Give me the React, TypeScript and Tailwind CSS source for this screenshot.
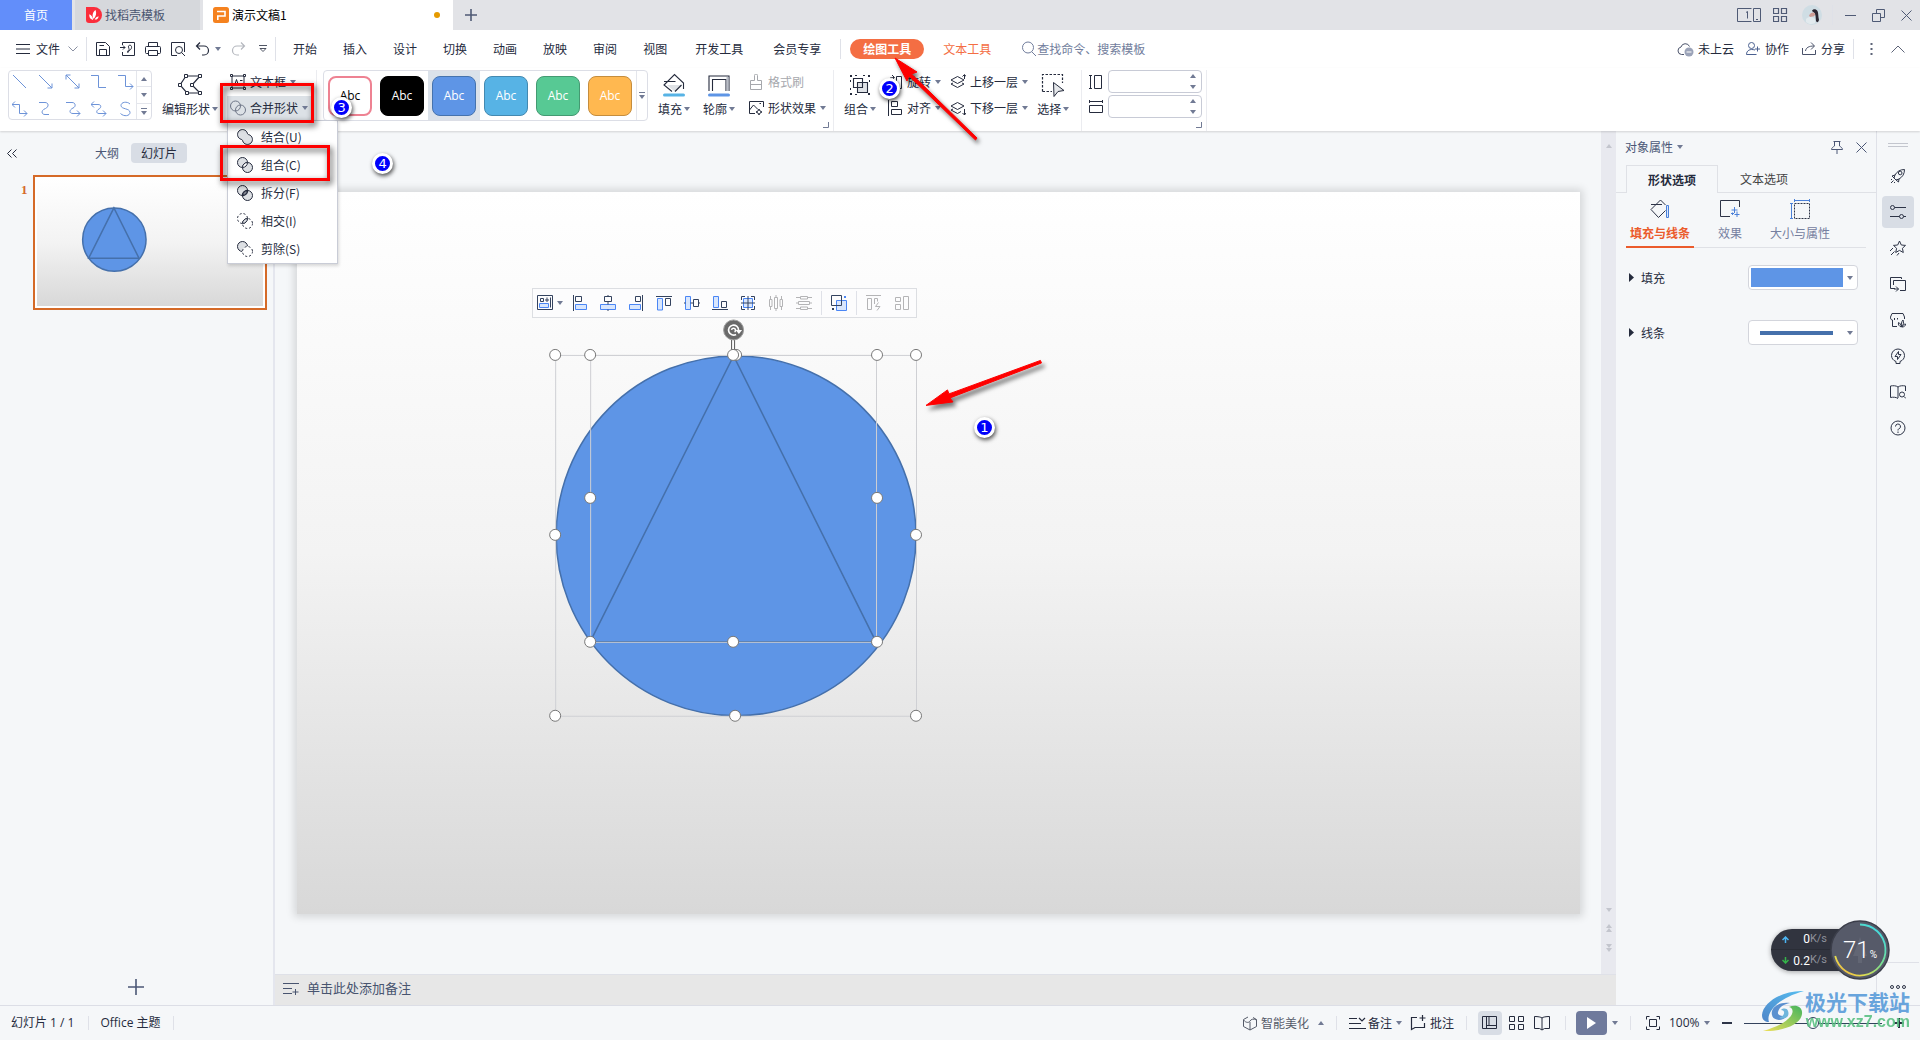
import React from 'react';

type IconProps = { children: React.ReactNode; className?: string; box?: string };

const Icon = ({ children, className = 'w-4 h-4', box = '0 0 16 16' }: IconProps) => (
  <svg viewBox={box} className={`shrink-0 ${className}`} fill="none" stroke="currentColor" strokeWidth="1" aria-hidden="true">
    {children}
  </svg>
);

const Caret = ({ up = false, className = 'text-[#717a94]' }: { up?: boolean; className?: string }) => (
  <svg viewBox="0 0 6 4" className={`w-[6px] h-1 shrink-0 ${className}`} fill="currentColor" aria-hidden="true">
    <path d={up ? 'M0 4L3 0L6 4z' : 'M0 0H6L3 4z'} />
  </svg>
);

const Divider = ({ className = 'h-6' }: { className?: string }) => (
  <span className={`w-px shrink-0 bg-[#dfe1e8] ${className}`} />
);

const Badge = ({ n, className }: { n: number; className: string }) => (
  <span
    className={`absolute z-40 w-[21px] h-[21px] rounded-full border-[3px] border-white bg-[#0000fb] text-white text-[13px] leading-[15px] text-center font-['DejaVu_Sans'] shadow-[1px_2px_4px_rgba(0,0,0,0.7)] ${className}`}
  >
    {n}
  </span>
);

const RedBox = ({ className }: { className: string }) => (
  <span
    className={`absolute z-30 pointer-events-none border-[3px] border-[#fe0000] drop-shadow-[2px_3px_3px_rgba(0,0,0,0.75)] ${className}`}
  />
);

/* ---------- title bar ---------- */

const TitleBar = () => (
  <header className="flex items-stretch h-[30px] bg-[#e2e3e7] text-[#4f5a75]">
    <button className="w-[72px] bg-[#628efa] text-white">首页</button>
    <button className="ml-[3px] w-[125px] bg-[#d6d8dc] flex items-center gap-[3px] pl-[11px] text-[#4a5570]">
      <svg viewBox="0 0 16 16" className="w-4 h-4">
        <path d="M0 0H8A8 8 0 0 1 8 16H3A3 3 0 0 1 0 13z" fill="#fb2d3b" />
        <path d="M7.2 13C3.8 12 3 9.5 3.4 7.2C5.2 8 6.8 9.6 7.2 13zM7.6 12C5.8 8.5 6.6 5 9.6 3C10.8 6.4 10 9.6 7.6 12zM8.6 12.6C9.6 10.6 11 9.6 12.6 9.2C12.4 11.4 11 12.8 8.6 12.6z" fill="#fff" />
      </svg>
      找稻壳模板
    </button>
    <button className="ml-[3px] w-[250px] bg-white flex items-center pl-[10px] pr-[13px] text-black">
      <svg viewBox="0 0 16 16" className="w-4 h-4 mr-[3px]">
        <rect width="16" height="16" rx="2.5" fill="#f5821f" />
        <path d="M4 4.500H12V9H4.800V13" stroke="#fff" strokeWidth="1.600" fill="none" />
      </svg>
      演示文稿1
      <span className="ml-auto w-[6px] h-[6px] rounded-full bg-[#e59a00]" />
    </button>
    <button aria-label="新建" className="w-9 flex items-center justify-center">
      <Icon className="w-3 h-3" box="0 0 12 12"><path d="M6 0V12M0 6H12" strokeWidth="1.6" /></Icon>
    </button>
    <div className="ml-auto flex items-center pr-2">
      <button aria-label="窗口布局">
        <Icon className="w-6 h-[14px]" box="0 0 24 14">
          <path d="M14.500 .5H.5V13.500H14.500M16.500 .5H23.500V13.500H16.500zM19 11.500H21M9 4.500L10.500 3.500V10.500" />
        </Icon>
      </button>
      <button aria-label="应用" className="ml-3">
        <Icon className="w-[15px] h-[15px]" box="0 0 15 15">
          <path d="M.5 .5H5.5V5.5H.5zM8.5 .5H13.5V5.5H8.5zM.5 8.5H5.5V13.5H.5zM8.5 8.5H13.5V13.5H8.5z" strokeWidth="1.2" />
        </Icon>
      </button>
      <button aria-label="账户" className="ml-[14px]">
        <svg viewBox="0 0 20 20" className="w-5 h-5">
          <circle cx="10" cy="10" r="10" fill="#cfdde4" />
          <path d="M10 6C10.500 4 14 3.500 15.500 6C16.500 8 16 11 17 15C16 18 14.500 17.500 14 16C13.500 13 14 10 12.500 8z" fill="#2b2530" />
          <path d="M7 10.500C8.500 8 10.500 6.500 12.500 8C14 9.500 12.500 11.500 10.500 11.500L8 12z" fill="#cf9b94" />
          <path d="M4 14C7 11 11 12 13 14V18C10 20 6 19 4 17z" fill="#e2eaee" />
        </svg>
      </button>
      <Divider className="h-5 ml-[10px] bg-[#c5c8d0]" />
      <button aria-label="最小化" className="ml-3">
        <Icon className="w-[11px] h-[11px]" box="0 0 11 11"><path d="M0 5.500H11" /></Icon>
      </button>
      <button aria-label="还原" className="ml-4">
        <Icon className="w-[13px] h-[13px]" box="0 0 13 13"><path d="M.5 4.500H8.500V12.500H.5zM4.500 4.500V.5H12.500V8.500H8.500" /></Icon>
      </button>
      <button aria-label="关闭" className="ml-4">
        <Icon className="w-[11px] h-[11px]" box="0 0 11 11"><path d="M.5 .5L10.500 10.500M10.500 .5L.5 10.500" /></Icon>
      </button>
    </div>
  </header>
);

/* ---------- menu row ---------- */

const quickActions = [
  { label: '保存', d: 'M1.500 1.500H10.500L14.500 5.500V14.500H1.500zM4.500 14.500V8.500H11.500V14.500M4.500 4.500H9' },
  { label: '输出为PDF', d: 'M2.500 4V1.500H14.500V14.500H2.500V11M0 6.500H5M3 4.500L5 6.500L3 8.500M7 10.500C10 9.500 12 8 11.500 5.500C11 3.500 8 4 8.500 6C9 8.500 10 9 7.500 12' },
  { label: '打印', d: 'M3.500 5V1.500H12.500V5M3.500 12.500H1.500A1 1 0 0 1 .5 11.500V6.500A1 1 0 0 1 1.500 5.500H14.500A1 1 0 0 1 15.500 6.500V11.500A1 1 0 0 1 14.500 12.500H12.500M3.500 9.500H12.500V14.500H3.500z' },
  { label: '打印预览', d: 'M7 14.500H1.500V1.500H14.500V11M12.500 9A3.500 3.500 0 1 1 5.500 9A3.500 3.500 0 1 1 12.500 9M11.500 11.500L15 15' },
];

const menus = ['开始', '插入', '设计', '切换', '动画', '放映', '审阅', '视图'];

const MenuRow = () => (
  <nav className="flex items-center h-[38px] bg-white pl-4 pr-[15px]">
    <button className="flex items-center">
      <Icon className="w-[14px] h-[10px]" box="0 0 14 10"><path d="M0 .5H14M0 5H14M0 9.500H14" /></Icon>
      <span className="ml-1.5">文件</span>
      <Icon className="w-[10px] h-[6px] ml-2 text-[#8a90a2]" box="0 0 10 6"><path d="M.5 .5L5 5L9.500 .5" /></Icon>
    </button>
    <Divider className="h-6 ml-2" />
    <div className="flex items-center gap-[9px] ml-2">
      {quickActions.map((a) => (
        <button key={a.label} aria-label={a.label}>
          <Icon><path d={a.d} /></Icon>
        </button>
      ))}
      <button aria-label="撤销" className="flex items-center gap-1">
        <Icon><path d="M5 1.500L1.500 5L5 8.500M1.500 5H9A4.500 4.500 0 0 1 9 14H7" strokeWidth="1.2" /></Icon>
        <Caret />
      </button>
      <button aria-label="恢复" className="text-[#b4b7be]">
        <Icon><path d="M11 1.500L14.500 5L11 8.500M14.500 5H7A4.500 4.500 0 0 0 7 14H9" strokeWidth="1.2" /></Icon>
      </button>
      <button aria-label="自定义快速访问" className="ml-1">
        <Icon className="w-2 h-2" box="0 0 8 8"><path d="M0 .5H8M1 3.500H7L4 6.500z" strokeWidth="0.800" /></Icon>
      </button>
    </div>
    <Divider className="h-6 ml-2" />
    <div className="flex items-center ml-1">
      {menus.map((m) => (
        <button key={m} className="px-[13px]">{m}</button>
      ))}
      <button className="px-[15px]">开发工具</button>
      <button className="px-[15px]">会员专享</button>
    </div>
    <Divider className="h-5 ml-1" />
    <div className="relative z-30 ml-[9px]">
      <button className="block w-[74px] h-5 rounded-full bg-[#f46e43] text-white font-bold">绘图工具</button>
      <svg viewBox="0 0 100 100" className="absolute left-10 top-[15px] w-[100px] h-[100px] pointer-events-none drop-shadow-[2px_3px_2px_rgba(0,0,0,0.6)]">
        <path d="M5 4L27 18L21.500 20L87 84L85.500 86L19 22L17 27z" fill="#fe0000" stroke="#fe0000" />
      </svg>
      <Badge n={2} className="left-[29px] top-[39px]" />
    </div>
    <button className="ml-[19px] text-[#f46e43]">文本工具</button>
    <label className="flex items-center ml-[30px] text-[#717d9c]">
      <Icon><path d="M12.500 6.500A5.500 5.500 0 1 1 1.500 6.500A5.500 5.500 0 1 1 12.500 6.500M11 11L15 15" /></Icon>
      <input aria-label="查找命令" placeholder="查找命令、搜索模板" className="w-[140px] outline-none placeholder:text-[#717d9c]" />
    </label>
    <div className="ml-auto flex items-center">
      <button className="flex items-center gap-1">
        <Icon className="w-[17px] h-4" box="0 0 17 16">
          <path d="M7 13.500H4.500A3.800 3.800 0 0 1 4 6A4.500 4.500 0 0 1 12.500 5.500" stroke="#4a526a" />
          <circle cx="12" cy="11" r="4.500" fill="#9ba3b8" stroke="none" />
          <path d="M9.500 11H14.500" stroke="#fff" />
        </Icon>
        未上云
      </button>
      <button className="flex items-center gap-1 ml-[11px]">
        <Icon><path d="M9.500 4.500A3 3 0 1 1 3.500 4.500A3 3 0 1 1 9.500 4.500M10 9C5 7.500 1.500 9.500 1.500 13.500H11.500M12.500 5.500V10.500M10 8H15" stroke="#4a6090" /></Icon>
        协作
      </button>
      <button className="flex items-center gap-1 ml-3">
        <Icon><path d="M1.500 7V13.500H14.500V9M4.500 10C5 6.500 8 5 13 5M10 1.500L13.500 5L10 8.500" stroke="#4a526a" /></Icon>
        分享
      </button>
      <Divider className="h-5 ml-2" />
      <button aria-label="更多" className="ml-4">
        <Icon className="w-[3px] h-3" box="0 0 3 12"><path d="M.5 0H2.500V2H.5zM.5 5H2.500V7H.5zM.5 10H2.500V12H.5z" fill="#5d6478" stroke="none" /></Icon>
      </button>
      <button aria-label="收起功能区" className="ml-[18px]">
        <Icon className="w-[14px] h-2" box="0 0 14 8"><path d="M.5 7.500L7 1L13.500 7.500" stroke="#5d6478" /></Icon>
      </button>
    </div>
  </nav>
);

/* ---------- ribbon ---------- */

const lineShapes = [
  'M1 1L14 14',
  'M1 1L14 14M14 9.500V14H9.500',
  'M1 1L14 14M14 9.500V14H9.500M1 5.500V1H5.500',
  'M0 1.500H7.500V13.500H15',
  'M0 1.500H7.500V12.500H15M12 9.500L15 12.500L12 15.500',
  'M0 3.500H7.500V12.500H15M12 9.500L15 12.500L12 15.500M3 .5L0 3.500L3 6.500',
  'M1 1.500H7C11 1.500 11 6 7.500 7.500C3 9 3 13.500 7 13.500H11',
  'M1 1.500H7C11 1.500 11 6 8 7C4 9 4 12.500 8 12.500H15M12 9.500L15 12.500L12 15.500',
  'M0 3.500H7C11 3.500 10 7 8 8C5 9.500 5 12.500 8 12.500H15M12 9.500L15 12.500L12 15.500M3 .5L0 3.500L3 6.500',
  'M12 3C9 0 3 1 3 4.500C3 8.500 12 7 12 11.500C12 15 6 16 2.500 12.500',
];

const swatches = [
  { name: '红色轮廓', style: 'bg-white border-[#ee8292] text-black border-2' },
  { name: '黑色填充', style: 'bg-black border-black text-white' },
  { name: '蓝色填充', style: 'bg-[#5e95e6] border-[#4573ae] text-white' },
  { name: '浅蓝填充', style: 'bg-[#57b3e5] border-[#4489b0] text-white' },
  { name: '绿色填充', style: 'bg-[#57c994] border-[#449a72] text-white' },
  { name: '橙色填充', style: 'bg-[#ffb850] border-[#c58d3d] text-white' },
];

const BigButton = ({ label, icon }: { label: string; icon: React.ReactNode }) => (
  <button className="flex flex-col items-center">
    <span className="h-[30px] flex items-center">{icon}</span>
    <span className="h-[18px] flex items-center gap-0.5">{label}<Caret /></span>
  </button>
);

const RowButton = ({ label, icon, caret = true, className = '' }: { label: string; icon: React.ReactNode; caret?: boolean; className?: string }) => (
  <button className={`h-6 flex items-center gap-1 whitespace-nowrap ${className}`}>
    {icon}
    {label}
    {caret && <Caret />}
  </button>
);

const Launcher = () => (
  <button aria-label="更多设置" className="absolute right-1 bottom-[3px] text-[#717a94]">
    <Icon className="w-[6px] h-[6px]" box="0 0 6 6"><path d="M5.500 0V5.500H0" /></Icon>
  </button>
);

const A = 'M10.500 5.500A5 5 0 1 1 .5 5.500A5 5 0 1 1 10.500 5.500';
const B = 'M15.500 10.500A5 5 0 1 1 5.500 10.500A5 5 0 1 1 15.500 10.500';
const LENS = 'M5.500 10.500A5 5 0 0 1 10.500 5.500A5 5 0 0 1 5.500 10.500z';

const mergeItems = [
  { label: '结合(U)', icon: <path d="M4 10.300A5 5 0 1 1 10.300 4C10.700 5.300 11 5.500 12 5.700A5 5 0 1 1 5.700 12C5.500 11 5.300 10.700 4 10.300z" fill="#dde0e4" /> },
  { label: '组合(C)', icon: <><path d={A} fill="#dde0e4" /><path d={B} fill="#dde0e4" /><path d={LENS} fill="#fff" /></> },
  { label: '拆分(F)', icon: <><path d={A} fill="#dde0e4" /><path d={B} fill="#dde0e4" /><path d={LENS} fill="#fff" strokeWidth="1.500" /><path d="M6.500 9.500A3 3 0 0 1 9.500 6.500A3 3 0 0 1 6.500 9.500z" fill="#dde0e4" strokeWidth="0.800" /></> },
  { label: '相交(I)', icon: <><path d={A} strokeDasharray="2 2" /><path d={B} strokeDasharray="2 2" /><path d={LENS} fill="#dde0e4" /></> },
  { label: '剪除(S)', icon: <><path d={A} fill="#dde0e4" /><path d={B} fill="#fff" stroke="#fff" /><path d={B} strokeDasharray="2 2" /></> },
];

const MergeMenu = () => (
  <>
    <ul className="absolute z-20 left-0 top-[50px] w-[111px] bg-white border border-[#c9ccd6] pt-0.5 shadow-[1px_2px_3px_rgba(0,0,0,0.15)]">
      {mergeItems.map((item) => (
        <li key={item.label}>
          <button className="w-full h-7 flex items-center gap-2 pl-[9px]">
            <Icon>{item.icon}</Icon>
            {item.label}
          </button>
        </li>
      ))}
    </ul>
    <RedBox className="-left-[7px] top-[13px] w-[94px] h-10" />
    <RedBox className="-left-[7px] top-[75px] w-[110px] h-9" />
    <Badge n={3} className="left-[104px] top-[27px]" />
    <Badge n={4} className="left-[145px] top-[83px]" />
  </>
);

const SizeField = ({ label, d }: { label: string; d: string }) => (
  <label className="flex items-center gap-1">
    <Icon><path d={d} /></Icon>
    <span className="flex items-center w-[94px] h-[23px] border border-[#c8cbd6] rounded-sm bg-white pr-[5px]">
      <input aria-label={label} className="min-w-0 flex-1 h-full px-1 outline-none" />
      <span className="flex flex-col gap-[7px]"><Caret up /><Caret /></span>
    </span>
  </label>
);

const layers = 'M1 6L7.500 2.500L14 6L7.500 9.500z';

const Ribbon = () => (
  <section className="relative z-20 flex items-start h-[63px] bg-white pl-2 pt-0.5 shadow-[0_1px_2px_rgba(0,0,0,0.15)]">
    <div className="flex w-36 h-[50px] border border-[#dcdee6] rounded-sm">
      <div className="grid grid-cols-5 flex-1 gap-x-2 gap-y-2 pl-[3px] pt-[3px] text-[#6d93d8]">
        {lineShapes.map((d, i) => (
          <button key={i} aria-label={`线条 ${i + 1}`} className="w-4 h-4"><Icon><path d={d} /></Icon></button>
        ))}
      </div>
      <div className="w-[15px] flex flex-col border-l border-[#e4e6ec] divide-y divide-[#e4e6ec]">
        <button aria-label="上一行" className="flex-1 flex items-center justify-center"><Caret up /></button>
        <button aria-label="下一行" className="flex-1 flex items-center justify-center"><Caret /></button>
        <button aria-label="展开" className="flex-1 flex flex-col gap-0.5 items-center justify-center"><span className="w-[6px] h-px bg-[#717a94]" /><Caret /></button>
      </div>
    </div>

    <div className="ml-2.5">
      <BigButton
        label="编辑形状"
        icon={
          <Icon className="w-6 h-6" box="0 0 24 24">
            <path d="M8 3H22L14 12L22 20H9L2 12z" strokeWidth="1.2" />
            <path d="M6.500 1.500h3v3h-3zM20.500 1.500h3v3h-3zM.5 10.500h3v3h-3zM12.500 10.500h3v3h-3zM7.500 18.500h3v3h-3zM20.500 18.500h3v3h-3z" fill="#fff" />
          </Icon>
        }
      />
    </div>

    <div className="relative flex flex-col gap-0.5 ml-[9px]">
      <RowButton
        className="px-[3px]"
        label="文本框"
        icon={<Icon><path d="M2 2H14V14H2zM4.500 11.500L6.500 5.500L8.500 11.500M5.500 9.500H8M10 6.500H12.500M10 9.500H12.500" /><path d="M.5 .5h2v2h-2zM13.500 .5h2v2h-2zM.5 13.500h2v2h-2zM13.500 13.500h2v2h-2z" fill="#fff" /></Icon>}
      />
      <RowButton
        className="px-[3px] bg-[#dce1e6]"
        label="合并形状"
        icon={<Icon className="w-4 h-4 text-[#6f7788]"><path d="M10.500 6A5 5 0 1 1 .5 6A5 5 0 1 1 10.500 6M15.500 10A5 5 0 1 1 5.500 10A5 5 0 1 1 15.500 10" /></Icon>}
      />
      <MergeMenu />
    </div>

    <Divider className="h-[61px] ml-[5px] bg-[#ebecf0]" />

    <div className="flex ml-1.5 w-[325px] h-[51px] border border-[#dcdee6] rounded-sm">
      {swatches.map((s, i) => (
        <button
          key={s.name}
          aria-label={s.name}
          className={`w-[52px] h-full flex items-center justify-center ${i === 2 ? 'bg-[#dbe2ea]' : ''}`}
        >
          <span className={`w-11 h-10 rounded-lg border flex items-center justify-center font-['Open_Sans'] ${s.style}`}>Abc</span>
        </button>
      ))}
      <button aria-label="更多样式" className="flex-1 border-l border-[#e4e6ec] flex flex-col gap-0.5 items-center justify-center">
        <span className="w-[6px] h-px bg-[#717a94]" />
        <Caret />
      </button>
    </div>

    <div className="relative flex ml-2.5 gap-[13px] h-[61px] pr-[7px] items-start">
      <BigButton
        label="填充"
        icon={
          <Icon className="w-[22px] h-6" box="0 0 22 24">
            <path d="M4 12H18L11.500 18.500z" fill="#dfe2e6" stroke="none" />
            <path d="M9 18.500L1 12L11.500 1.500L20.500 10V16M18.500 12L12 18.500M1 8.500H12.500" strokeWidth="1.1" />
            <path d="M1.500 22H20.500" stroke="#57b3e5" strokeWidth="3" strokeLinecap="round" />
          </Icon>
        }
      />
      <BigButton
        label="轮廓"
        icon={
          <Icon className="w-[22px] h-6" box="0 0 22 24">
            <path d="M1 18V3H21V18M4.500 18V6.500H18V18" strokeWidth="1.1" />
            <path d="M19.500 4V18" stroke="#b9bdc6" strokeWidth="2" />
            <path d="M1.500 22H20.500" stroke="#5e95e6" strokeWidth="3" strokeLinecap="round" />
          </Icon>
        }
      />
      <div className="flex flex-col gap-0.5">
        <RowButton
          className="text-[#a6a8ad]"
          label="格式刷"
          caret={false}
          icon={<Icon><path d="M6.500 6.500V1.500A1.500 1.500 0 0 1 9.500 1.500V6.500H13.500V15.500H2.500V6.500zM2.500 10.500H13.500" /></Icon>}
        />
        <RowButton
          label="形状效果"
          icon={<Icon><path d="M7 13.500H1.500V1.500H15.500V7M1.500 10L5.500 5L10 9.500M11.500 3.500H13M11 9L12 11L14 12L12 13L11 15L10 13L8 12L10 11z" /></Icon>}
        />
      </div>
      <Launcher />
    </div>

    <Divider className="h-[61px] bg-[#ebecf0]" />

    <div className="flex ml-2.5 gap-[9px] items-start">
      <BigButton
        label="组合"
        icon={
          <Icon className="w-[22px] h-[22px]" box="0 0 22 22">
            <path d="M8 8H19V18H8z" fill="#dfe2e6" stroke="none" />
            <path d="M4.500 4.500H13.500V13.500H4.500zM8.500 8.500H18.500V18.500H8.500z" strokeWidth="1.1" />
            <path d="M1 1h2v2h-2zM6 1h2v1h-2zM14 1h2v1h-2zM19 1h2v2h-2zM1 6h1v2h-1zM20 6h1v2h-1zM1 14h1v2h-1zM1 19h2v2h-2zM6 20h2v1h-2zM19 19h2v2h-2z" fill="currentColor" stroke="none" />
          </Icon>
        }
      />
      <div className="flex flex-col gap-0.5 ml-0.5">
        <RowButton label="旋转" icon={<Icon><path d="M9.500 2.500H14.500V14.500H9.500zM1.500 7.500C1.500 4 3.500 3.500 7 3.500M5 1L7.500 3.500L5 6" /></Icon>} />
        <RowButton label="对齐" icon={<Icon><path d="M1.500 0V16M4.500 1.500H10.500V6.500H4.500zM4.500 9.500H14.500V14.500H4.500z" /></Icon>} />
      </div>
      <div className="flex flex-col gap-0.5">
        <RowButton label="上移一层" icon={<Icon><path d={layers} /><path d="M1 10L7.500 13.500L14 10M1 10L3 9M14 10L12 9M14.500 5V1M12.500 2.500L14.500 .5L16 2.500" /></Icon>} />
        <RowButton label="下移一层" icon={<Icon><path d={layers} /><path d="M1 10L7.500 13.500L11 11.500M1 10L3 9M14.500 9V15M12.500 13L14.500 15L16 13" /></Icon>} />
      </div>
      <BigButton
        label="选择"
        icon={
          <Icon className="w-6 h-6" box="0 0 24 24">
            <path d="M1.500 18.500V1.500H21.500V10M1.500 18.500H11" strokeDasharray="2.500 1.500" strokeWidth="1.200" />
            <path d="M12.500 9.500L23 17.500L17 18.500L13 23.500z" fill="#e6e8eb" />
          </Icon>
        }
      />
    </div>

    <Divider className="h-[61px] ml-3 bg-[#ebecf0]" />

    <div className="relative flex flex-col gap-0.5 ml-1.5 h-[61px] pr-1">
      <SizeField label="高度" d="M1 1.500H4M2.500 1.500V14.500M1 14.500H4M6.500 1.500H13.500V14.500H6.500z" />
      <SizeField label="宽度" d="M1.500 1V4M1.500 2.500H14.500M14.500 1V4M1.500 6.500H14.500V13.500H1.500z" />
      <Launcher />
    </div>
    <Divider className="h-[61px] bg-[#ebecf0]" />
  </section>
);

/* ---------- slide ---------- */

const SlideShapes = () => (
  <>
    <circle cx="439" cy="344" r="180" fill="#5e95e6" stroke="#4570ab" strokeWidth="1.500" vectorEffect="non-scaling-stroke" />
    <path d="M436.500 164L293 450H579z" fill="#5e95e6" stroke="#4570ab" strokeWidth="1.500" vectorEffect="non-scaling-stroke" />
  </>
);

const handles = [
  [258, 163], [439, 163], [619, 163], [258, 343], [619, 343], [258, 524], [438, 524], [619, 524],
  [293, 163], [436, 163], [580, 163], [293, 306], [580, 306], [293, 450], [436, 450], [580, 450],
];

const Thumbnails = () => (
  <aside className="relative w-[275px] shrink-0 flex flex-col border-r-2 border-[#e4e6ee]">
    <div className="flex items-center pl-[7px] pt-3">
      <button aria-label="收起" className="mr-[78px]">
        <Icon className="w-[10px] h-[9px]" box="0 0 10 9"><path d="M4.500 .5L.5 4.500L4.500 8.500M9.500 .5L5.500 4.500L9.500 8.500" /></Icon>
      </button>
      <button className="text-[#4b5776]">大纲</button>
      <button className="ml-3 w-14 h-5 rounded-sm bg-[#d8dde5]">幻灯片</button>
    </div>
    <div className="flex pl-[21px] pr-1.5 pt-3">
      <span className="w-3 pt-1.5 text-[#d56a28] text-[13px] font-bold font-['Liberation_Serif']">1</span>
      <button aria-label="幻灯片 1" className="flex-1 border-2 border-[#d56a28] bg-white p-0.5">
        <span className="block aspect-video bg-linear-to-b from-white via-[#f3f3f3] via-50% to-[#d8d8d8]">
          <svg viewBox="0 0 1283 722" className="w-full h-full"><SlideShapes /></svg>
        </span>
      </button>
    </div>
    <button aria-label="新建幻灯片" className="mt-auto mx-auto pr-0.5 pb-[10px] text-[#4b5776]">
      <Icon><path d="M8 0V16M0 8H16" strokeWidth="1.600" /></Icon>
    </button>
  </aside>
);

const alignTools = [
  { label: '左对齐', dark: 'M1.500 0V16M3.500 1.500H9.500V6.500H3.500z', blue: 'M3.500 9.500H14.500V14.500H3.500z' },
  { label: '水平居中', dark: 'M8 0V1.500M8 6.500V9.500M8 14.500V16M4.500 1.500H11.500V6.500H4.500z', blue: 'M.5 9.500H15.500V14.500H.5z' },
  { label: '右对齐', dark: 'M14.500 0V16M7.500 1.500H12.500V6.500H7.500z', blue: 'M1.500 9.500H12.500V14.500H1.500z' },
  { label: '靠上对齐', dark: 'M0 1.500H16M9.500 3.500H14.500V10.500H9.500z', blue: 'M1.500 3.500H6.500V15H1.500z' },
  { label: '垂直居中', dark: 'M0 8H1.500M6.500 8H9.500M14.500 8H16M9.500 4.500H14.500V11.500H9.500z', blue: 'M1.500 1.500H6.500V14.500H1.500z' },
  { label: '靠下对齐', dark: 'M0 14.500H16M9.500 6.500H14.500V12.500H9.500z', blue: 'M1.500 1.500H6.500V12.500H1.500z' },
  { label: '居中对齐', dark: 'M1.500 5V1.500H5M11 1.500H14.500V5M1.500 11V14.500H5M11 14.500H14.500V11M8 1V15M1 8H15', blue: 'M3.500 3.500H12.500V12.500H3.500z' },
];

const distributeTools = [
  { label: '横向分布', d: 'M1.500 4.500H4V11.500H1.500zM6.500 2.500H9.500V13.500H6.500zM12 4.500H14.500V11.500H12zM2.500 1V4M2.500 12V15M8 0V2M8 14V16M13.500 1V4M13.500 12V15' },
  { label: '纵向分布', d: 'M4.500 1.500H11.500V4H4.500zM2.500 6.500H13.500V9.500H2.500zM4.500 12H11.500V14.500H4.500zM0 2.500H4M12 2.500H16M0 8H2M14 8H16M0 13.500H4M12 13.500H16' },
];

const FloatingToolbar = () => (
  <div className="absolute z-10 left-[235px] top-24 h-[30px] border border-[#dcdee2] bg-[#fcfcfd] flex items-center gap-3 pl-1 pr-1.5">
    <button aria-label="对齐方式" className="flex items-center gap-1 -mr-[3px]">
      <Icon className="w-4 h-4 text-[#34435f]"><path d="M.5 .5H15.500V14.500H.5zM3.500 3.500H6.500V6.500H3.500zM10 2.500V7M8 5H12M13.500 2.500V12.500" /><path d="M2.500 8.500H11.500V12.500H2.500z" stroke="#4a86f5" fill="#d8e6fd" /></Icon>
      <Caret />
    </button>
    {alignTools.map((t) => (
      <button key={t.label} aria-label={t.label}>
        <Icon className="w-4 h-4 text-[#34435f]"><path d={t.blue} stroke="#4a86f5" fill="#d8e6fd" /><path d={t.dark} /></Icon>
      </button>
    ))}
    {distributeTools.map((t) => (
      <button key={t.label} aria-label={t.label}>
        <Icon className="w-4 h-4 text-[#b4b4b6]"><path d={t.d} /></Icon>
      </button>
    ))}
    <Divider className="h-6 -mx-[3px]" />
    <button aria-label="组合">
      <Icon className="w-4 h-4 text-[#34435f]">
        <path d="M5.500 5.500H15.500V15.500H5.500z" stroke="#4a86f5" fill="#d8e6fd" />
        <path d="M.5 .5H10.500V10.500H.5z" />
        <path d="M13 1h2v2h-2z" fill="#4a86f5" stroke="none" />
        <path d="M1 13h2v2h-2z" fill="currentColor" stroke="none" />
      </Icon>
    </button>
    <Divider className="h-6 -mx-[3px]" />
    <button aria-label="智能对齐">
      <Icon className="w-4 h-4 text-[#b4b4b6]"><path d="M0 .5H15M1.500 3.500H5.500V14.500H1.500zM8.500 9V3.500H11.500V6.500M12.500 7.500L9.500 11.500H14L11 15.500" /></Icon>
    </button>
    <button aria-label="排列">
      <Icon className="w-4 h-4 text-[#b4b4b6]"><path d="M1.500 2.500H6.500V6.500H1.500zM1.500 9.500H6.500V14.500H1.500zM9.500 1.500H14.500V14.500H9.500z" /></Icon>
    </button>
  </div>
);

const Canvas = () => (
  <main className="flex-1 min-w-0 flex flex-col">
    <div className="flex-1 flex">
      <div className="flex-1 pl-[22px] pr-[21px] pt-[61px] pb-14">
        <div className="relative aspect-video bg-linear-to-b from-white via-[#f3f3f3] via-50% to-[#d8d8d8] shadow-[0_0_8px_3px_rgba(0,0,0,0.13)]">
          <svg viewBox="0 0 1283 722" className="absolute inset-0 w-full h-full" fill="none">
            <SlideShapes />
            <path d="M258.500 163.500H619.500V524.500H258.500zM293.500 163.500H579.500V450.500H293.500z" stroke="#cfd0d4" />
            <path d="M434.500 143V158M437.500 143V158" stroke="#555" />
            {handles.map(([x, y]) => (
              <circle key={`${x}-${y}`} cx={x} cy={y} r="5.500" fill="#fff" stroke="#777" />
            ))}
            <circle cx="436.500" cy="138" r="10" fill="#6a6a6a" stroke="#a0a0a0" />
            <path d="M439 142.500A5 5 0 1 1 441.500 138M434.500 138A2 2 0 1 1 437.500 140" stroke="#fff" strokeWidth="1.600" />
            <path d="M438.500 138H445L441.800 142z" fill="#fff" />
            <path
              d="M629 213.500L650.500 198L652 202L743.500 168.500L744.500 171L653 206L656 210z"
              fill="#fe0000"
              stroke="#fe0000"
              className="drop-shadow-[3px_4px_2px_rgba(0,0,0,0.5)]"
            />
          </svg>
          <FloatingToolbar />
          <Badge n={1} className="left-[677px] top-[225px]" />
        </div>
      </div>
      <div className="w-[15px] bg-[#e8e9ef] flex flex-col items-center pt-[13px] pb-[22px] text-[#c3c5cd]">
        <Caret up className="text-[#c3c5cd]" />
        <span className="mt-auto flex flex-col items-center gap-3">
          <Caret className="text-[#c3c5cd]" />
          <span className="flex flex-col"><Caret up className="text-[#c3c5cd]" /><Caret up className="text-[#c3c5cd]" /></span>
          <span className="flex flex-col"><Caret className="text-[#c3c5cd]" /><Caret className="text-[#c3c5cd]" /></span>
        </span>
      </div>
    </div>
    <label className="flex items-center gap-2 h-[31px] border-t border-[#dfe1e8] bg-[#e7e7e7] pl-2 pb-1 text-[#48546f]">
      <Icon><path d="M0 3.500H16M0 8.500H9M0 13.500H9M12.500 9V15M9.500 12H15.500" /></Icon>
      <input aria-label="备注" placeholder="单击此处添加备注" className="flex-1 text-[13px] leading-5 outline-none placeholder:text-[#48546f]" />
    </label>
  </main>
);

/* ---------- properties ---------- */

const PropertyPanel = () => (
  <aside className="w-[260px] shrink-0">
    <div className="flex items-center h-[34px] px-[9px] pb-0.5 text-[#4b5776]">
      <button className="flex items-center gap-1">对象属性<Caret /></button>
      <button aria-label="固定" className="ml-auto">
        <Icon className="w-[14px] h-[14px]" box="0 0 14 14"><path d="M3.500 1.500H10.500M4.500 1.500V6C3 7 1.500 8 1.500 9.500H12.500C12.500 8 11 7 9.500 6V1.500M7 9.500V14" /></Icon>
      </button>
      <button aria-label="关闭面板" className="ml-3">
        <Icon className="w-[11px] h-[11px]" box="0 0 11 11"><path d="M.5 .5L10.500 10.500M10.500 .5L.5 10.500" /></Icon>
      </button>
    </div>
    <div className="flex h-7">
      <span className="w-[10px] border-b border-[#dfe1e6]" />
      <button className="w-[92px] border border-b-0 border-[#dfe1e6] font-bold">形状选项</button>
      <button className="flex-1 border-b border-[#dfe1e6] pr-[66px] text-[#444]">文本选项</button>
    </div>
    <div className="flex mx-[10px] h-[55px] border-b border-[#dfe1e6] text-[#7680a0]">
      <button className="w-[68px] h-[55px] pt-1.5 flex flex-col items-center border-b-2 border-[#eb5b2c] text-[#eb5b2c] font-bold">
        <Icon className="w-5 h-[21px]" box="0 0 20 21">
          <path d="M1 5.500H12M10.500 1L15.500 6M10.500 1L1 10.500L8.500 18.500L15.500 11.500" stroke="#2d3447" />
          <path d="M16.500 6.500H18.500V18.500H16.500z" stroke="#4a80d8" fill="#d8e6fd" />
        </Icon>
        <span className="leading-5 mt-[3px]">填充与线条</span>
      </button>
      <button className="w-[72px] pt-1.5 flex flex-col items-center">
        <Icon className="w-5 h-[21px]" box="0 0 20 21">
          <path d="M10 17.500H.5V1.500H19.500V8" stroke="#2d3447" />
          <path d="M14.500 8V14M11.500 11H17.500M17 12.500V18M14.500 15.500H19.500M12.500 13.500V16M11 14.500H14" stroke="#4a80d8" />
        </Icon>
        <span className="leading-5 mt-[3px]">效果</span>
      </button>
      <button className="w-[68px] pt-1.5 flex flex-col items-center">
        <Icon className="w-5 h-[21px]" box="0 0 20 21">
          <path d="M4.500 4.500H19.500V19.500H4.500z" stroke="#2d3447" strokeDasharray="2 1" />
          <path d="M4.500 0V3M4.500 1.500H19.500M19.500 0V3M0 4.500H3M1.500 4.500V19.500M0 19.500H3" stroke="#4a80d8" />
        </Icon>
        <span className="leading-5 mt-[3px]">大小与属性</span>
      </button>
    </div>
    <div className="flex flex-col gap-[30px] pl-[13px] pr-[18px] pt-[17px]">
      {['填充', '线条'].map((name) => (
        <div key={name} className="flex items-center">
          <label htmlFor={name} className="flex items-center gap-[7px]">
            <svg viewBox="0 0 5 9" className="w-[5px] h-[9px]"><path d="M0 0L5 4.500L0 9z" fill="#252b3d" /></svg>
            {name}
          </label>
          <div className="relative ml-auto">
            <select id={name} className="block appearance-none w-[110px] h-[25px] rounded-sm border border-[#d3d5dc] bg-white">
              <option aria-label="蓝色" />
            </select>
            <div className="absolute inset-0 flex items-center pl-[3px] pr-[5px] pointer-events-none">
              {name === '填充' ? (
                <span className="w-[92px] h-[19px] bg-[#5e95e6]" />
              ) : (
                <span className="ml-[9px] w-[73px] h-1 bg-[#4570ab]" />
              )}
              <span className="ml-auto flex"><Caret /></span>
            </div>
          </div>
        </div>
      ))}
    </div>
  </aside>
);

const sideTools = [
  { label: '快捷', d: 'M14.500 1.500C10 1.500 7 3.500 5 7L2 8L4 10M14.500 1.500C14.500 6 12.500 9 9 11L8.500 14L6 12M4 10L6 12L9 11M5 7L4 10M12 5A1.800 1.800 0 1 1 8.400 5A1.800 1.800 0 1 1 12 5M1 15L3.500 12.500M1 12L2 11M4 15L5 14' },
  { label: '对象属性', d: 'M4.500 3.500A2 2 0 1 1 .5 3.500A2 2 0 1 1 4.500 3.500M4.500 3.500H16M13.500 12.500A2 2 0 1 1 9.500 12.500A2 2 0 1 1 13.500 12.500M0 12.500H9.500M13.500 12.500H16' },
  { label: '自定义动画', d: 'M9.500 1L11.300 5L15.500 5.400L12.400 8.300L13.300 12.500L9.500 10.400L5.700 12.500L6.600 8.300L3.500 5.400L7.700 5zM3 8L0 11M4.500 11.500L1 15M9 13L7 15.500' },
  { label: '幻灯片切换', d: 'M5 12.500H.5V1.500H11.500V3M10 14.500H15.500V4.500H3.500V9M6 15.500L8.500 13L6 10.500M8.500 13H4' },
  { label: '稻壳资源', d: 'M2.500 8V14.500H7M2.500 8C.5 8 .5 6 .5 5L2 1.500H13L14.500 5V7M4.500 6V8M7.500 6V7.500M11.500 15C9 14.500 8 12.500 8.500 10.500C10 11 11 12.500 11.500 15ZM11.500 15C11 12 11.500 9.500 13 8C14 10.500 13.500 13 11.500 15ZM12 15C13 13 14 12 15.500 12C15.500 14 14 15 12 15Z' },
  { label: '智能推荐', d: 'M6 13.500C3 12.500 1.500 10 1.500 7.500A6.500 6.500 0 0 1 14.500 7.500C14.500 10 13 12.500 10 13.500V15.500H6zM8.500 3.500L5 8.500H7.500V11.500L11 6.500H8.500z' },
  { label: '素材库', d: 'M8 3V14M8 3C6 1.500 3 1.500 .5 2V13.500C3 13 6 13 8 14.500M8 3C10 1.500 13 1.500 15.500 2V7M14.500 10.500A2.500 2.500 0 1 1 9.500 10.500A2.500 2.500 0 1 1 14.500 10.500M14 12.500L16 14.500' },
  { label: '帮助', d: 'M15 8A7 7 0 1 1 1 8A7 7 0 1 1 15 8M5.500 6.500A2.500 2.500 0 1 1 9 8.800C8 9.300 8 9.500 8 10.500M8 11.500V13' },
];

const SideBar = () => (
  <aside className="w-11 shrink-0 border-l border-[#dfe1e8] flex flex-col items-center pr-px text-[#2d3447]">
    <Icon className="w-5 h-1 mt-3 mb-[13px] text-[#c3c6ce]" box="0 0 20 4"><path d="M0 .5H20M0 3.500H20" /></Icon>
    <div className="flex flex-col gap-1">
      {sideTools.map((t, i) => (
        <button key={t.label} aria-label={t.label} className={`w-8 h-8 rounded-sm flex items-center justify-center ${i === 1 ? 'bg-[#d8dde5]' : ''}`}>
          <Icon><path d={t.d} /></Icon>
        </button>
      ))}
    </div>
    <span className="mt-auto w-full h-px bg-[#dfe1e8]" />
    <button aria-label="更多工具" className="mt-[22px] mb-4">
      <Icon className="w-4 h-1" box="0 0 16 4"><path d="M3.500 2A1.500 1.500 0 1 1 .5 2A1.500 1.500 0 1 1 3.500 2M9.500 2A1.500 1.500 0 1 1 6.500 2A1.500 1.500 0 1 1 9.500 2M15.500 2A1.500 1.500 0 1 1 12.500 2A1.500 1.500 0 1 1 15.500 2" /></Icon>
    </button>
  </aside>
);

/* ---------- status bar ---------- */

const StatusBar = () => (
  <footer className="flex items-center h-[35px] border-t border-[#dcdee6] pl-[11px] pr-4">
    <span className="font-['Open_Sans','Noto_Sans_CJK_SC',sans-serif]">幻灯片 1 / 1</span>
    <Divider className="h-[14px] ml-[14px]" />
    <span className="ml-[11px] font-['Open_Sans','Noto_Sans_CJK_SC',sans-serif]">Office 主题</span>
    <Divider className="h-[14px] ml-3" />
    <div className="ml-auto flex items-center">
      <button className="flex items-center gap-[3px] text-[#555b69]">
        <Icon><path d="M6 2L1.500 4.500V11.500L8 15L14.500 11.500V4.500L11 2.500M1.500 5C4 8 7 8 8 6C9 4 12 3.500 14.500 5M8 7V15" /></Icon>
        智能美化
        <span className="ml-1.5 flex"><Caret up /></span>
      </button>
      <Divider className="h-[14px] mx-3" />
      <button className="flex items-center gap-0.5">
        <Icon className="w-[17px] h-4" box="0 0 17 16"><path d="M0 3.500H8M0 8.500H12M0 13.500H17M10 3L13 6L16 3" strokeWidth="1.200" /></Icon>
        备注
        <span className="ml-0.5 flex"><Caret /></span>
      </button>
      <button className="flex items-center gap-1 ml-2">
        <Icon><path d="M7 2.500H1.500V14.500L5 12.500H14.500V8M12.500 0V6M9.500 3H15.500" strokeWidth="1.200" /></Icon>
        批注
      </button>
      <Divider className="h-[14px] ml-3 mr-[11px]" />
      <button aria-label="普通视图" className="w-6 h-6 rounded-sm bg-[#d8dde5] flex items-center justify-center">
        <Icon><path d="M.5 1.500H14.500V13.500H.5zM4.500 1.500V13.500M4.500 10.500H14.500M7 1.500V10.500" /></Icon>
      </button>
      <button aria-label="幻灯片浏览" className="ml-[7px]">
        <Icon><path d="M.5 1.500H5.500V6.500H.5zM9.500 1.500H14.500V6.500H9.500zM.5 9.500H5.500V14.500H.5zM9.500 9.500H14.500V14.500H9.500z" /></Icon>
      </button>
      <button aria-label="阅读视图" className="ml-[9px]">
        <Icon><path d="M8 3V15M8 3C7 2 4 1.500 .5 1.500V13.500H5.500L8 15L10.500 13.500H15.500V1.500C12 1.500 9 2 8 3" /></Icon>
      </button>
      <Divider className="h-[14px] ml-[15px] mr-[10px]" />
      <button aria-label="放映" className="w-[31px] h-6 rounded-sm bg-[#6f7a9c] flex items-center justify-center">
        <svg viewBox="0 0 9 12" className="w-[9px] h-3"><path d="M0 0L9 6L0 12z" fill="#fff" /></svg>
      </button>
      <button aria-label="放映选项" className="ml-[5px] flex"><Caret /></button>
      <Divider className="h-[14px] ml-3 mr-[14px]" />
      <button aria-label="最佳显示比例">
        <Icon><path d="M1.500 4.500V1.500H4.500M11.500 1.500H14.500V4.500M1.500 11.500V14.500H4.500M11.500 14.500H14.500V11.500M4.500 4.500H11.500V11.500H4.500z" /></Icon>
      </button>
      <span className="relative flex items-center ml-2">
        <select aria-label="显示比例" className="appearance-none w-[41px] bg-transparent font-['Open_Sans']">
          <option>100%</option>
        </select>
        <span className="absolute right-0 pointer-events-none flex"><Caret /></span>
      </span>
      <button aria-label="缩小" className="ml-3 w-[10px] h-0.5 bg-[#2d3447]" />
      <input
        type="range"
        aria-label="缩放"
        defaultValue={50}
        className="ml-3 w-[138px] h-px appearance-none bg-[#33425c] [&::-webkit-slider-thumb]:appearance-none [&::-webkit-slider-thumb]:w-3 [&::-webkit-slider-thumb]:h-3 [&::-webkit-slider-thumb]:rounded-full [&::-webkit-slider-thumb]:border [&::-webkit-slider-thumb]:border-[#33425c] [&::-webkit-slider-thumb]:bg-white"
      />
      <button aria-label="放大" className="ml-3">
        <Icon className="w-[10px] h-[10px]" box="0 0 10 10"><path d="M5 0V10M0 5H10" strokeWidth="2" /></Icon>
      </button>
    </div>
  </footer>
);

/* ---------- desktop overlays ---------- */

const SpeedWidget = () => (
  <div className="absolute z-40 right-[30px] bottom-[60px] flex items-center font-['Roboto']">
    <div className="w-[95px] h-[42px] -mr-[36px] rounded-l-full bg-[#31343f] text-white text-xs shadow-[0_1px_5px_rgba(0,0,0,0.35)]">
      {[
        { v: '0', d: 'M3.500 7V1M.5 4L3.500 1L6.500 4', c: 'text-[#4bb4f2]' },
        { v: '0.2', d: 'M3.500 0V6M.5 3L3.500 6L6.500 3', c: 'text-[#35b34a]' },
      ].map((r) => (
        <div key={r.v} className="h-[21px] flex items-center pl-[11px] pr-[39px] border-b border-[#2a2d36] last:border-0">
          <Icon className={`w-[7px] h-[7px] ${r.c}`} box="0 0 7 7"><path d={r.d} strokeWidth="1.500" /></Icon>
          <span className="ml-auto">{r.v}</span>
          <span className="text-[11px] text-[#8e919b]">K/s</span>
        </div>
      ))}
    </div>
    <div className="relative w-[60px] h-[60px] flex items-center justify-center text-white">
      <svg viewBox="0 0 60 60" className="absolute inset-0" fill="none">
        <defs>
          <linearGradient id="ring" x1="0.8" y1="0" x2="0.1" y2="1">
            <stop offset="0" stopColor="#3fd9e6" />
            <stop offset="0.5" stopColor="#7fe08a" />
            <stop offset="0.8" stopColor="#e6dc4e" />
            <stop offset="1" stopColor="#f2a93c" />
          </linearGradient>
        </defs>
        <circle cx="30" cy="30" r="29" fill="#565a69" stroke="#3b3e4a" strokeWidth="1.500" />
        <path d="M30 17L37 36H32V43H28V36H23z" fill="#626674" />
        <path d="M30 4.500A25.500 25.500 0 1 1 5.200 36" stroke="url(#ring)" strokeWidth="1.800" />
      </svg>
      <span className="relative text-2xl font-light">71</span>
      <span className="relative text-[10px] pt-[10px]">%</span>
    </div>
  </div>
);

const Watermark = () => (
  <div className="absolute z-30 right-[10px] bottom-2 flex items-center pointer-events-none">
    <svg viewBox="0 0 44 42" className="w-11 h-[42px]">
      <defs>
        <linearGradient id="sky" x1="0" y1="1" x2="1" y2="0">
          <stop offset="0" stopColor="#4f86c9" />
          <stop offset="1" stopColor="#55bdf0" />
        </linearGradient>
        <linearGradient id="leaf" x1="0" y1="1" x2="1" y2="0">
          <stop offset="0" stopColor="#f0e05a" />
          <stop offset="1" stopColor="#43b45c" />
        </linearGradient>
      </defs>
      <path d="M43 1C22 0 2 12 1 25C1 30 4 32 8 32C5 24 14 9 43 1z" fill="url(#sky)" />
      <path d="M2 41C22 42 40 34 41 24C42 16 34 14 28 17C36 19 32 33 2 41z" fill="url(#leaf)" />
      <path d="M29 13C18 11 9 18 11 25C12 31 22 32 27 25C22 27 16 26 17 22C18 17 23 14 29 13z" fill="#5b90cf" />
      <path d="M18 28C25 30 29 26 27 21C26 18 22 18 20 20C24 20 25 25 18 28z" fill="#6fb6dc" />
    </svg>
    <div className="flex flex-col text-right">
      <span className="text-[21px] leading-[22px] font-bold text-[#68a4dc]">极光下载站</span>
      <span className="text-base leading-5 font-bold text-[#5cc184] opacity-90 font-['Liberation_Sans']">www.xz7.com</span>
    </div>
  </div>
);

const App = () => (
  <div className="relative min-h-screen flex flex-col bg-[#f5f7f9] text-xs text-[#252b3d] font-['Noto_Sans_CJK_SC',sans-serif] overflow-hidden">
    <TitleBar />
    <MenuRow />
    <Ribbon />
    <div className="flex-1 flex">
      <Thumbnails />
      <Canvas />
      <PropertyPanel />
      <SideBar />
    </div>
    <StatusBar />
    <SpeedWidget />
    <Watermark />
  </div>
);

export default App;
